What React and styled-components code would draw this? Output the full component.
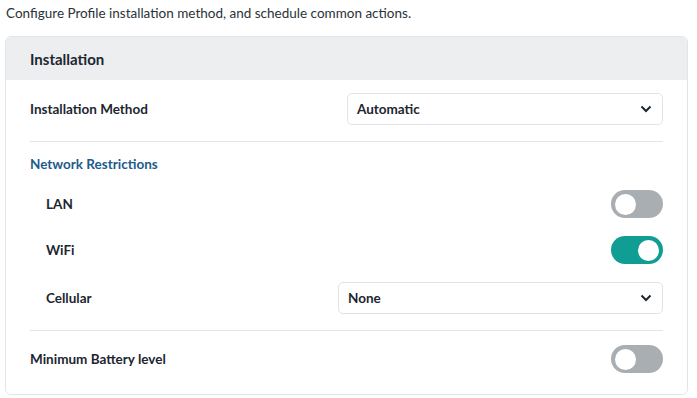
import React, { useState } from "react";
import styled, { createGlobalStyle } from "styled-components";

const GlobalStyle = createGlobalStyle`
  body {
    margin: 0;
    background: #ffffff;
    font-family: "Lato", "Liberation Sans", sans-serif;
    color: #1d2630;
  }
`;

const Page = styled.div`
  padding: 4px 9px 0 5px;
`;

const Intro = styled.p`
  margin: 0 0 14px 1px;
  font-size: 13.5px;
  line-height: 18px;
  color: #2b3238;
`;

const Card = styled.section`
  border: 1px solid #e2e4e6;
  border-radius: 6px;
  overflow: hidden;
`;

const CardHeader = styled.div`
  background: #eceeef;
  height: 43px;
  display: flex;
  align-items: center;
  padding: 0 24px;
  font-size: 15px;
  font-weight: 700;
  color: #1d2630;
`;

const CardBody = styled.div`
  padding: 13px 24px 19px;
`;

const Row = styled.div`
  display: flex;
  align-items: center;
  justify-content: space-between;
  min-height: ${(p) => p.height || 32}px;
  padding-left: ${(p) => (p.indent ? 16 : 0)}px;
`;

const Label = styled.span`
  font-size: 13.5px;
  font-weight: 700;
  color: #1d2630;
`;

const SectionTitle = styled.div`
  font-size: 13.5px;
  font-weight: 700;
  color: #1d5b8c;
  margin: 14px 0 9px;
`;

const Divider = styled.hr`
  border: none;
  border-top: 1px solid #e3e5e7;
  margin: ${(p) => p.gap || "16px 0 0"};
`;

const Select = styled.div`
  width: ${(p) => p.width}px;
  height: 32px;
  box-sizing: border-box;
  border: 1px solid #e1e3e5;
  border-radius: 5px;
  display: flex;
  align-items: center;
  justify-content: space-between;
  padding: 0 10px 0 9px;
  font-size: 13.5px;
  font-weight: 700;
  color: #1d2630;
`;

const Track = styled.button`
  width: 52px;
  height: 28px;
  border: none;
  border-radius: 14px;
  padding: 0 4px;
  display: flex;
  align-items: center;
  justify-content: ${(p) => (p.on ? "flex-end" : "flex-start")};
  background: ${(p) => (p.on ? "#0f9d94" : "#a8aeb2")};
  cursor: pointer;
`;

const Knob = styled.span`
  width: 21px;
  height: 21px;
  border-radius: 50%;
  background: #ffffff;
`;

const Chevron = () => (
  <svg width="12" height="8" viewBox="0 0 12 8">
    <path d="M1.5 1.5 L6 6 L10.5 1.5" fill="none" stroke="#1d2630" strokeWidth="2" />
  </svg>
);

const Toggle = ({ initial }) => {
  const [on, setOn] = useState(initial);
  return (
    <Track on={on ? 1 : 0} onClick={() => setOn(!on)}>
      <Knob />
    </Track>
  );
};

const App = () => (
  <Page>
    <GlobalStyle />
    <Intro>Configure Profile installation method, and schedule common actions.</Intro>
    <Card>
      <CardHeader>Installation</CardHeader>
      <CardBody>
        <Row>
          <Label>Installation Method</Label>
          <Select width={316}>
            Automatic
            <Chevron />
          </Select>
        </Row>
        <Divider />
        <SectionTitle>Network Restrictions</SectionTitle>
        <Row indent height={46}>
          <Label>LAN</Label>
          <Toggle initial={false} />
        </Row>
        <Row indent height={46}>
          <Label>WiFi</Label>
          <Toggle initial={true} />
        </Row>
        <Row indent height={50}>
          <Label>Cellular</Label>
          <Select width={325}>
            None
            <Chevron />
          </Select>
        </Row>
        <Divider gap="7px 0 12px" />
        <Row>
          <Label>Minimum Battery level</Label>
          <Toggle initial={false} />
        </Row>
      </CardBody>
    </Card>
  </Page>
);

export default App;
